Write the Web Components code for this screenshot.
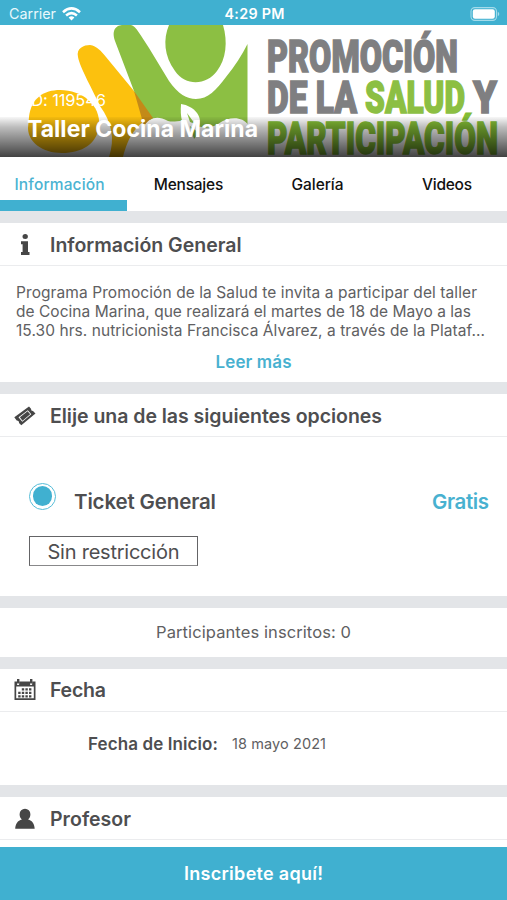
<!DOCTYPE html>
<html lang="es">
<head>
<meta charset="utf-8">
<title>Taller Cocina Marina</title>
<style>
html,body{margin:0;padding:0}
body{background:#fff;font-family:Inter,"Liberation Sans",sans-serif;color:#4e4e50;--accent:#40b0d0}
</style>
</head>
<body>
<event-page></event-page>
<script>
const define=(name,html,setup)=>customElements.define(name,class extends HTMLElement{
  connectedCallback(){
    if(this.shadowRoot)return;
    this.attachShadow({mode:'open'}).innerHTML=html;
    if(setup)setup(this);
  }
});

// One line of text tracked so that it spans the given width.
define('tracked-text','<style>:host{display:inline-block;white-space:nowrap;flex:none}span{display:inline-block}</style><span><slot></slot></span>',el=>{
  const w=parseFloat(el.getAttribute('w'));
  const s=el.shadowRoot.querySelector('span');
  const n=el.textContent.length;
  const natural=s.getBoundingClientRect().width;
  el.style.width=w+'px';
  s.style.letterSpacing=((w-natural)/(n-1))+'px';
});

define('status-bar',`<style>
:host{display:grid;grid-template-columns:1fr auto 1fr;align-items:center;height:25px;box-sizing:border-box;padding:2px 7px 0 9px;background:var(--accent);color:#fff;font-size:14.300px;line-height:20px}
.l{display:flex;align-items:center;gap:6px;color:#e9f8fc}
.c{font-weight:600}
.r{display:flex;justify-content:flex-end}
svg{display:block}
</style>
<div class="l"><tracked-text w="47">Carrier</tracked-text>
<svg width="19" height="14" viewBox="0 0 19 14"><g fill="none" stroke="#fff" stroke-width="2.6"><path d="M1 5.2Q9.500-2.300 18 5.200"/><path d="M4.100 8.500Q9.500 3.900 14.900 8.500"/></g><path d="M6.600 10.500Q9.500 8.200 12.400 10.500L9.500 13.500Z" fill="#fff"/></svg></div>
<div class="c"><tracked-text w="60">4:29 PM</tracked-text></div>
<div class="r"><svg width="30" height="14" viewBox="0 0 30 14"><rect x="1" y=".6" width="25.500" height="12.800" rx="3.800" fill="none" stroke="#a4dbea" stroke-width="1.100"/><rect x="2.800" y="2.300" width="22" height="9.400" rx="2.200" fill="#fff"/><path d="M27.800 4.800v4.400q1.500-.7 1.500-2.200t-1.500-2.200z" fill="#a4dbea"/></svg></div>`);

define('hero-banner',`<style>
:host{display:block;position:relative;height:132px;overflow:hidden;background:#fff;color:#fff}
svg{display:block}
.shade{position:absolute;left:0;right:0;bottom:0;height:40px;background:linear-gradient(rgba(0,0,0,.03),rgba(0,0,0,.26) 25%,rgba(0,0,0,.74))}
.cap{position:absolute;left:27px;top:65px;display:grid;justify-items:start}
.id{font-size:16.500px;line-height:20px}
.t{font-size:23px;line-height:28px;font-weight:700;margin-top:5px}
</style>
<svg width="507" height="132" viewBox="0 25 507 132">
<path fill="#fcc10e" d="M29 117C31 98 44 90 60 90C82 90 101 105 99 126C97 144 82 153 62 153C42 153 28 142 28 128Z"/>
<path fill="#fcc10e" d="M78 57C76 48 84 45 90 45C97 46 101 51 106 57L134 91L153 117C137 122 128 137 123 157H109C115 139 112 123 100 106C93 90 80 68 78 57Z"/>
<path fill="#8cbf43" d="M115 41C111 29 117 25 123 25H131C136 26 141 36 149 48L169 81C178 94 187 99 196 99C208 99 216 90 226 77C235 66 242 55 247.500 44V124C243 118 231 115 218 124C207 130 200 128 193 123C182 118 176 123 168 121C160 117 155 117 150 120L134 91Z"/>
<path fill="#c38a18" d="M134 91L153 118Q148 120 144 126Z"/>
<path fill="#8cbf43" d="M169 25H223C228 42 226 59 217 71C207 85 186 87 175 71C164 56 163 39 169 25Z"/>
<path fill="#fff" d="M181 104C194 106 203 116 199 127L190 132C182 126 180 118 181 104Z"/>
<path fill="#8cbf43" d="M187 113L195 124L190 122ZM190 126L199 133L194 139Z"/>
<g font-family="Roboto,'Noto Sans',sans-serif" font-size="44.500" font-weight="900" fill="#7f7f81" stroke="#7f7f81" stroke-width="1.500">
<text x="267" y="72" textLength="191" lengthAdjust="spacingAndGlyphs">PROMOCIÓN</text>
<text x="267" y="113" textLength="90" lengthAdjust="spacingAndGlyphs">DE LA</text>
<text x="365" y="113" textLength="100" lengthAdjust="spacingAndGlyphs" fill="#8cbf43" stroke="#8cbf43">SALUD</text>
<text x="473" y="113" textLength="24" lengthAdjust="spacingAndGlyphs">Y</text>
<text x="267" y="154" textLength="231" lengthAdjust="spacingAndGlyphs" fill="#83bd35" stroke="#83bd35">PARTICIPACIÓN</text>
</g></svg>
<div class="shade"></div>
<div class="cap"><tracked-text class="id" w="79">ID: 119546</tracked-text><tracked-text class="t" w="231">Taller Cocina Marina</tracked-text></div>`);

define('tab-item',`<style>
:host{display:flex;box-sizing:border-box;height:54px;justify-content:center;padding-top:17px;font-size:15.500px;line-height:21px;font-weight:500;color:#111}
:host([active]){color:#4bb3d2;border-bottom:11px solid var(--accent);padding-right:8px}
</style><slot></slot>`);

define('tab-bar',`<style>:host{display:grid;grid-template-columns:127px 123px 135px 124px;height:54px;background:#fff}</style>
<tab-item active><tracked-text w="90">Información</tracked-text></tab-item>
<tab-item><tracked-text w="69.500">Mensajes</tracked-text></tab-item>
<tab-item><tracked-text w="52">Galería</tracked-text></tab-item>
<tab-item><tracked-text w="50">Videos</tracked-text></tab-item>`);

const icons={
info:'<path d="M8.500 2.500a2.700 2.500 0 1 1 5.400 0a2.700 2.500 0 1 1-5.400 0M7 7.200h7V18h1.500v3H7v-3h1.600v-7.700H7z"/>',
ticket:'<path fill-rule="evenodd" d="M0.300 12.200L15 1.500L17 3.700Q16.800 5.900 19 6L21.500 8.600L7.300 20.300L5 18.100Q5.300 15.700 2.700 15.600ZM4.500 12.300L8.300 16.700L17.300 9.200L13.800 5.200Z"/><path d="M5.900 12.300L13.600 6.200L16.200 9.200L8.500 15.700Z"/>',
calendar:'<path fill-rule="evenodd" d="M.5 2.500H3v3q1 1 2.200 0V2.500H16v3q1 1 2.200 0V2.500h3.300V21H.5zM2.200 7.500v11.800h17.600V7.500z"/><path d="M3 0h2.400v4.500H3zM16 0h2.400v4.500H16z"/><path d="M7.800 9.300h2.400v2.300H7.800zm3.600 0h2.400v2.300h-2.400zm3.600 0h2.400v2.300H15zM4.200 12.800h2.400v2.300H4.200zm3.600 0h2.400v2.300H7.800zm3.600 0h2.400v2.300h-2.400zm3.600 0h2.400v2.300H15zM4.200 16.300h2.400v2.200H4.200zm3.600 0h2.400v2.200H7.800zm3.600 0h2.400v2.200h-2.400zm3.600 0h2.400v2.200H15z"/>',
person:'<path d="M5.600 6.300a5.400 5.600 0 0 1 10.800 0c0 2.600-1 4-2.300 5.200c4.200 1 6.400 4.300 6.600 9.300H1.200c.2-5 2.500-8.300 6.700-9.300c-1.300-1.200-2.300-2.600-2.300-5.200z"/>'};

define('section-card',`<style>
:host{display:block;box-sizing:border-box;background:#fff;border-top:12px solid #e3e5e8}
header{display:flex;align-items:center;gap:14px;box-sizing:border-box;height:43px;padding:1px 0 0 14px;border-bottom:1.500px solid #ebecee;font-size:19.500px;line-height:24px;font-weight:600}
svg{display:block;fill:#464646}
</style><header><svg width="22" height="22" viewBox="0 0 22 22"></svg><slot name="title"></slot></header><slot></slot>`,el=>{
  const icon=el.getAttribute('icon'),h=el.shadowRoot.querySelector('header');
  if(icon)h.firstElementChild.innerHTML=icons[icon];else h.remove();
});

define('ticket-option',`<style>
:host{display:grid;padding:53px 18px 0 29px}
.row{display:flex;align-items:center;font-size:20.500px;line-height:24px;font-weight:600}
.radio{box-sizing:border-box;width:27px;height:27px;border:1.400px solid #56bdd8;border-radius:50%;padding:2.800px;margin:-12px 18px 0 0}
.radio i{display:block;width:100%;height:100%;border-radius:50%;background:var(--accent)}
.price{margin-left:auto;color:#48b1d0}
.tag{display:flex;justify-content:center;box-sizing:border-box;width:169px;height:30px;margin-top:22px;border:1.500px solid #646466;border-bottom-color:#88888a;font-size:20px;line-height:30px}
</style><div class="row"><span class="radio"><i></i></span><tracked-text w="142">Ticket General</tracked-text><tracked-text class="price" w="57">Gratis</tracked-text></div>
<div class="tag"><tracked-text w="132">Sin restricción</tracked-text></div>`);

define('action-bar',`<style>:host{position:fixed;left:0;right:0;bottom:0;height:53.500px;box-sizing:border-box;padding-top:1px;display:flex;align-items:center;justify-content:center;background:var(--accent);color:#fff;font-size:18px;font-weight:600;line-height:22px}</style><slot></slot>`);

define('event-page',`<style>
:host{display:block;height:900px;overflow:hidden}
.desc{display:grid;padding:17px 16px 0;font-size:15.500px;line-height:19.200px;color:#606062}
.more{display:flex;justify-content:center;margin-top:10px;font-size:17px;line-height:22px;font-weight:600;color:#48b1d0}
.count{display:flex;justify-content:center;padding-top:14px;font-size:16.500px;line-height:20px;color:#606062}
.date{display:flex;align-items:center;gap:14px;padding:22px 0 0 88px;line-height:20px}
.date b{font-size:17px;font-weight:600}.date span{font-size:14.500px;color:#606062}
</style>
<status-bar></status-bar><hero-banner></hero-banner><tab-bar></tab-bar>
<section-card icon="info" style="height:171px"><tracked-text slot="title" w="191.500">Información General</tracked-text>
<div class="desc"><tracked-text w="461">Programa Promoción de la Salud te invita a participar del taller</tracked-text><tracked-text w="455">de Cocina Marina, que realizará el martes de 18 de Mayo a las</tracked-text><tracked-text w="469">15.30 hrs. nutricionista Francisca Álvarez, a través de la Plataf...</tracked-text></div>
<div class="more"><tracked-text w="76">Leer más</tracked-text></div></section-card>
<section-card icon="ticket" style="height:213.500px"><tracked-text slot="title" w="332">Elije una de las siguientes opciones</tracked-text><ticket-option></ticket-option></section-card>
<section-card style="height:61px"><div class="count"><tracked-text w="195">Participantes inscritos: 0</tracked-text></div></section-card>
<section-card icon="calendar" style="height:128.500px"><tracked-text slot="title" w="56">Fecha</tracked-text><div class="date"><b><tracked-text w="130">Fecha de Inicio:</tracked-text></b><span><tracked-text w="94">18 mayo 2021</tracked-text></span></div></section-card>
<section-card icon="person" style="height:75px"><tracked-text slot="title" w="81">Profesor</tracked-text></section-card>
<action-bar><tracked-text w="139">Inscribete aquí!</tracked-text></action-bar>`);
</script>
</body>
</html>
